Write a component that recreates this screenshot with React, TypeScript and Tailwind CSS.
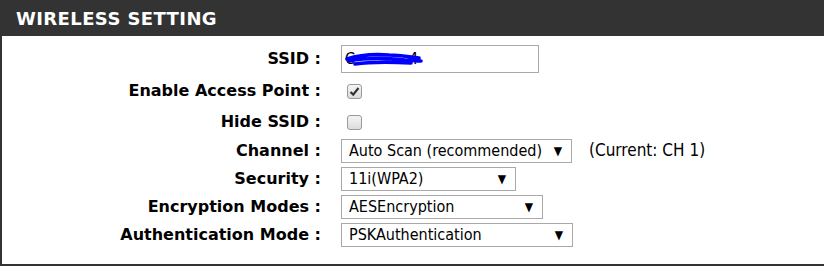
const labelFont = "font-['Verdana','DejaVu_Sans',sans-serif]";
const valueFont = "font-['Tahoma','DejaVu_Sans_Condensed','Liberation_Sans',sans-serif]";

function Row({ label, h, children }: { label: string; h: string; children?: React.ReactNode }) {
  return (
    <div className={`flex items-center ${h}`}>
      <div className={`w-[319px] text-right text-[16px] font-bold text-black ${labelFont}`}>{label}</div>
      <div className="ml-[20px] flex items-center">{children}</div>
    </div>
  );
}

function Select({ value, w }: { value: string; w: string }) {
  return (
    <div
      className={`flex h-[24px] ${w} items-center justify-between border border-[#a9a9a9] bg-white pl-[7px] pr-[9px] text-[16px] text-black ${valueFont}`}
    >
      <span>{value}</span>
      <span className="text-[12px]">▼</span>
    </div>
  );
}

function Checkbox({ checked }: { checked?: boolean }) {
  return (
    <div className="ml-[6px] flex h-[15px] w-[15px] items-center justify-center rounded-[3px] border border-[#9a9a9a] bg-gradient-to-b from-[#f4f4f4] to-[#dcdcdc]">
      {checked && (
        <svg width="11" height="11" viewBox="0 0 11 11">
          <path d="M1.5 6 L4.2 8.6 L9.5 2" fill="none" stroke="#333" strokeWidth="2.2" />
        </svg>
      )}
    </div>
  );
}

export default function App() {
  return (
    <div className="h-[266px] w-[824px] bg-white">
      <div className="h-[36px] bg-[#333333] pl-[16px] pt-[5px]">
        <span className={`text-[18px] font-bold tracking-[0.4px] text-white ${labelFont}`}>WIRELESS SETTING</span>
      </div>
      <div className="h-[230px] border-b-2 border-l-2 border-[#333333] pt-[7px]">
        <Row label="SSID :" h="h-[32px]">
          <div className={`relative flex h-[28px] w-[198px] items-center border border-[#a9a9a9] pl-[3px] text-[16px] ${valueFont}`}>
            <span>C</span>
            <span className="ml-[54px]">4</span>
            <svg className="absolute left-[3px] top-[6px]" width="78" height="16" viewBox="0 0 78 16">
              <path
                d="M2 7 C14 3 30 2 44 3 C52 3 60 4 74 6 M4 9 C20 6 40 6 60 8 C66 8 70 9 76 9 M10 12 C24 10 46 10 66 11"
                fill="none"
                stroke="#0000ff"
                strokeWidth="3.6"
                strokeLinecap="round"
              />
            </svg>
          </div>
        </Row>
        <Row label="Enable Access Point :" h="h-[32px]">
          <Checkbox checked />
        </Row>
        <Row label="Hide SSID :" h="h-[30px]">
          <Checkbox />
        </Row>
        <Row label="Channel :" h="h-[28px]">
          <Select value="Auto Scan (recommended)" w="w-[231px]" />
          <span className={`ml-[17px] text-[17px] ${valueFont}`}>(Current: CH 1)</span>
        </Row>
        <Row label="Security :" h="h-[28px]">
          <Select value="11i(WPA2)" w="w-[175px]" />
        </Row>
        <Row label="Encryption Modes :" h="h-[28px]">
          <Select value="AESEncryption" w="w-[202px]" />
        </Row>
        <Row label="Authentication Mode :" h="h-[28px]">
          <Select value="PSKAuthentication" w="w-[232px]" />
        </Row>
      </div>
    </div>
  );
}
